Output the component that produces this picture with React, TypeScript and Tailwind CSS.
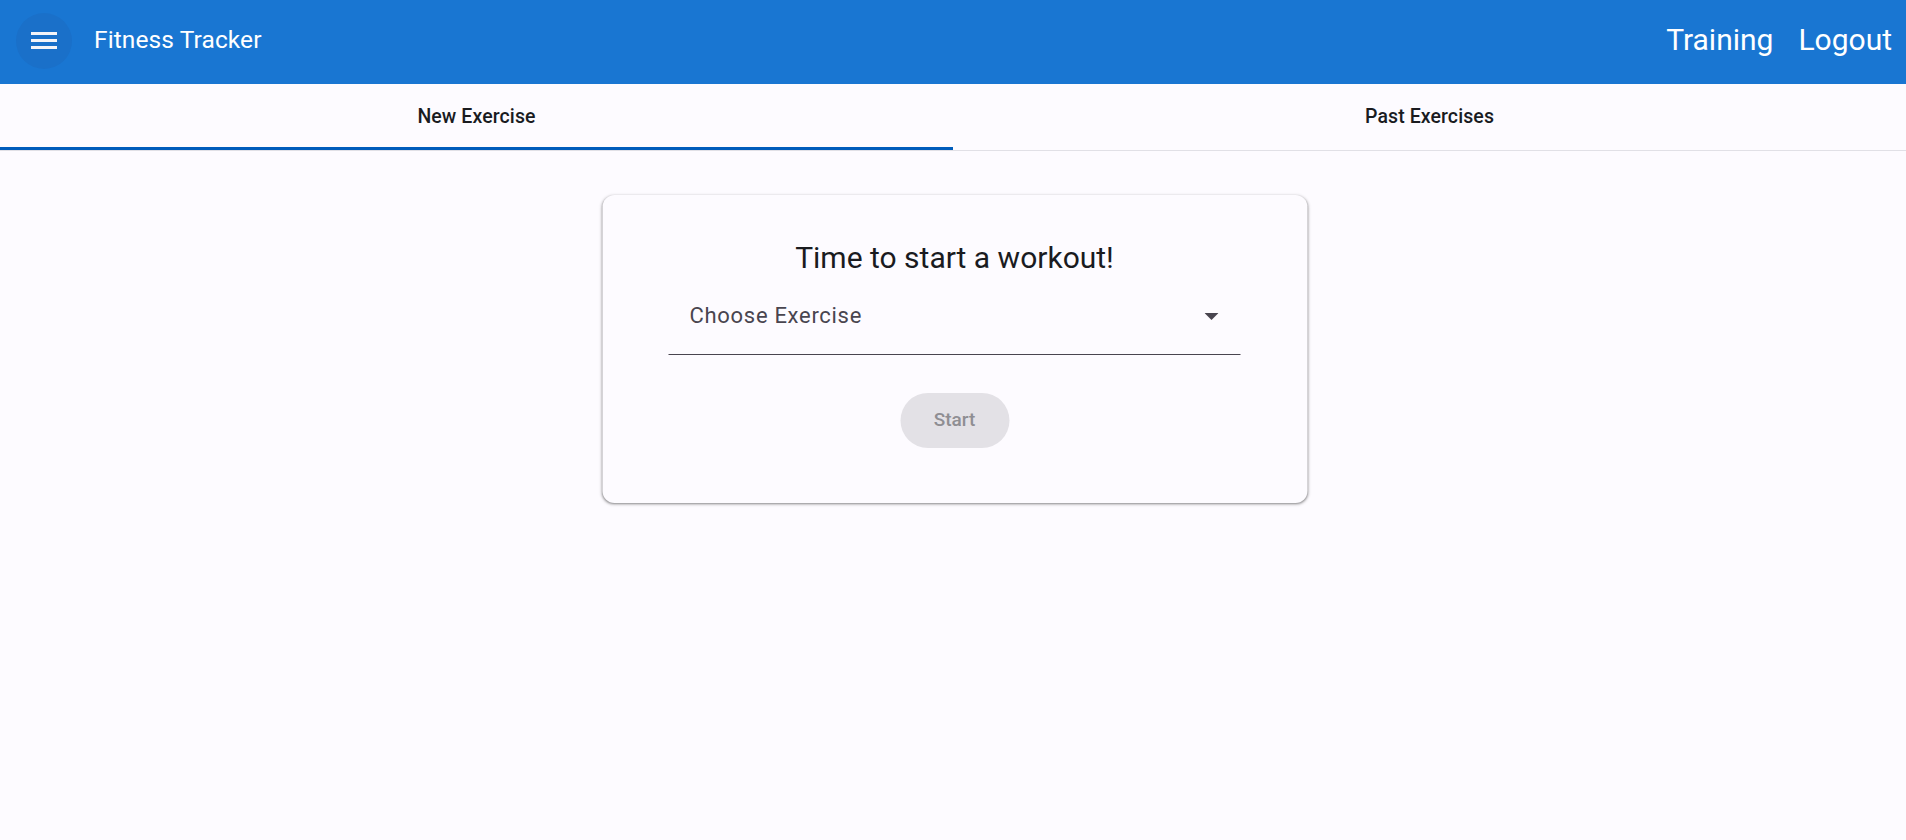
import { useState } from "react";

const tabs = ["New Exercise", "Past Exercises"];

function MenuIcon() {
  return (
    <svg viewBox="0 0 26 18" className="h-[18px] w-[26px]" aria-hidden="true">
      <rect x="0" y="0" width="26" height="3" fill="#f4f4f8" />
      <rect x="0" y="7" width="26" height="3" fill="#f4f4f8" />
      <rect x="0" y="14" width="26" height="3" fill="#f4f4f8" />
    </svg>
  );
}

export default function App() {
  const [active, setActive] = useState(0);

  return (
    <div className="min-h-screen bg-[#fdfbff] font-['Roboto',sans-serif]">
      <header className="flex h-[84px] items-center bg-[#1976d2] pb-[2px] pl-4 pr-[14px] text-white">
        <button
          className="flex h-[56px] w-[56px] items-center justify-center rounded-full bg-[#1a70c9]"
          aria-label="Menu"
        >
          <MenuIcon />
        </button>
        <span className="ml-[22px] pb-[1px] text-[24.5px] tracking-[0.1px]">Fitness Tracker</span>
        <nav className="ml-auto flex items-center gap-[25px] pb-[3px] text-[30px]">
          <a href="#">Training</a>
          <a href="#">Logout</a>
        </nav>
      </header>

      <div className="grid grid-cols-2 border-b border-[#e1e0e6]">
        {tabs.map((t, i) => (
          <button
            key={t}
            onClick={() => setActive(i)}
            className={
              "flex h-[66px] items-center justify-center border-b-[3px] pt-[2px] text-[19.5px] font-medium tracking-[0.1px] text-[#1a1b1f] " +
              (active === i ? "border-[#005cbb]" : "border-transparent")
            }
          >
            {t}
          </button>
        ))}
      </div>

      <div className="mx-auto mt-[44px] flex w-[705px] translate-x-[1.5px] flex-col items-center rounded-[12px] bg-[#fdfbff] pb-[55px] pt-[45px] shadow-[0_1px_2px_rgba(0,0,0,0.3),0_1px_3px_1px_rgba(0,0,0,0.15)]">
        <h1 className="text-[30px] leading-[36px] text-[#1a1b1f]">Time to start a workout!</h1>
        <div className="mt-[2px] flex h-[77px] w-[572px] items-center justify-between border-b border-[#49454f] pl-[21px] pr-[22px]">
          <span className="text-[22px] leading-[28px] tracking-[0.7px] text-[#49454f]">Choose Exercise</span>
          <svg viewBox="0 0 14 7" className="h-[7px] w-[14px]" aria-hidden="true">
            <path d="M0 0h14L7 7z" fill="#49454f" />
          </svg>
        </div>
        <button
          disabled
          className="mt-[38px] flex h-[55px] w-[109px] items-center justify-center rounded-full bg-[#e3e1e6] text-[19px] font-medium text-[#8f8e93]"
        >
          Start
        </button>
      </div>
    </div>
  );
}
